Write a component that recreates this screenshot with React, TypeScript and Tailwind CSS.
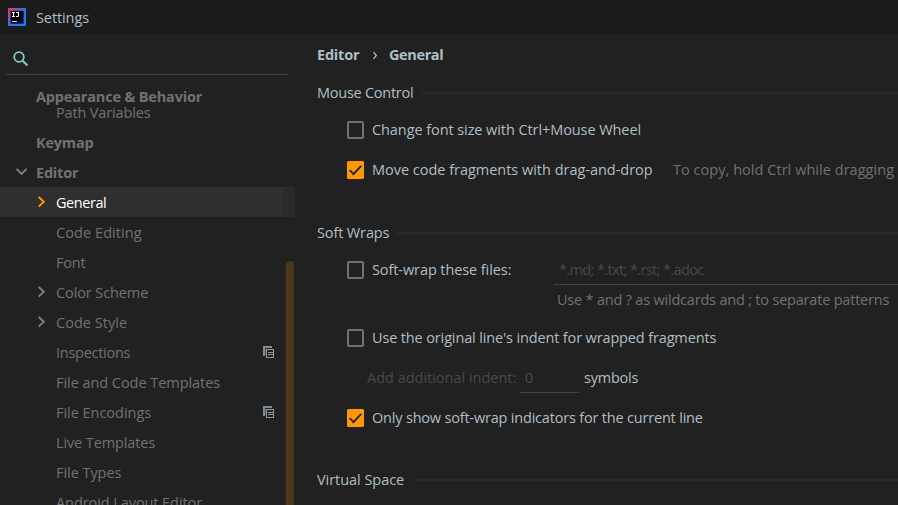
import type { ReactNode } from 'react'

function IntelliJLogo() {
  return (
    <svg className="shrink-0" width="18" height="18" viewBox="0 0 18 18">
      <defs>
        <linearGradient id="ij" x1="0" y1="0" x2="1" y2="0.9">
          <stop offset="0" stopColor="#e0356c" />
          <stop offset="0.3" stopColor="#8a55a8" />
          <stop offset="0.6" stopColor="#1f77f0" />
          <stop offset="1" stopColor="#0a84ff" />
        </linearGradient>
      </defs>
      <rect width="18" height="18" fill="url(#ij)" />
      <rect x="2.6" y="2.8" width="13" height="12.8" fill="#000" />
      <path d="M4 4.5h3M5.5 4.5v4M4 8.5h3M8 4.5h2.5v3q0 1-1 1H8" fill="none" stroke="#fff" strokeWidth="1.1" />
      <path d="M4 13.5h5" stroke="#ddd" strokeWidth="1" />
    </svg>
  )
}

function SearchIcon() {
  return (
    <svg width="16" height="16" viewBox="0 0 16 16" fill="none" stroke="#80cbc4">
      <circle cx="6" cy="6" r="4.8" strokeWidth="1.8" />
      <path d="M9.4 9.4l5 5" strokeWidth="2.1" />
    </svg>
  )
}

function Chevron({ open, color }: { open?: boolean; color: string }) {
  return (
    <svg width="12" height="12" viewBox="0 0 12 12" fill="none" stroke={color} strokeWidth="1.9">
      <path d={open ? 'M0.6 2.9l5 5 5-5' : 'M2.7 1l5.1 4.8-5.1 4.8'} />
    </svg>
  )
}

function ProjectIcon() {
  return (
    <svg width="12" height="12" viewBox="0 0 12 12" fill="none" shapeRendering="crispEdges">
      <path d="M0 0h9v2H2v8H0z" fill="#7e8b91" />
      <path d="M2 9V3h6" stroke="#4c5559" />
      <rect x="3.5" y="3.5" width="7" height="8" stroke="#8b989e" />
      <path d="M10.5 3v9" stroke="#8b989e" />
      <path d="M5 6.5h5M5 8.5h5" stroke="#8b989e" />
    </svg>
  )
}

type Item = { label: string; cls: string; arrow?: boolean; selected?: boolean; project?: boolean }

const items: Item[] = [
  { label: 'General', cls: 'tracking-[-0.45px] text-white', arrow: true, selected: true },
  { label: 'Code Editing', cls: 'tracking-[0.08px]' },
  { label: 'Font', cls: 'tracking-[-0.2px]' },
  { label: 'Color Scheme', cls: 'tracking-[-0.1px]', arrow: true },
  { label: 'Code Style', cls: 'tracking-[0.04px]', arrow: true },
  { label: 'Inspections', cls: 'tracking-[-0.27px]', project: true },
  { label: 'File and Code Templates', cls: 'tracking-[-0.05px]' },
  { label: 'File Encodings', cls: 'tracking-[-0.03px]', project: true },
  { label: 'Live Templates', cls: 'tracking-[-0.12px]' },
  { label: 'File Types', cls: 'tracking-[-0.05px]' },
  { label: 'Android Layout Editor', cls: 'tracking-[-0.08px]' },
]

function TreeRow({ label, cls, arrow, selected, project }: Item) {
  return (
    <div className="flex h-[30px] shrink-0">
      <div className={`flex w-[283px] items-center pl-[36px] ${selected ? 'bg-[#2f2f2f]' : ''}`}>
        <span className="w-[20px] shrink-0">
          {arrow && <Chevron color={selected ? '#ff9800' : '#808080'} />}
        </span>
        <span className={`pt-[2px] ${cls}`}>{label}</span>
        {project && (
          <span className="mr-[8px] ml-auto">
            <ProjectIcon />
          </span>
        )}
      </div>
      <div className={`w-[12px] ${selected ? 'bg-[#2a2a2a]' : ''}`} />
    </div>
  )
}

function Sidebar() {
  return (
    <aside className="relative flex w-[295px] shrink-0 flex-col overflow-hidden text-[#727272]">
      <div className="mr-[7px] ml-[6px] flex h-[41px] shrink-0 items-center border-b border-[#424242] pt-[9px] pl-[7px]">
        <SearchIcon />
      </div>
      <div className="flex h-[32px] shrink-0 items-end pl-[36px] leading-[20px] font-bold tracking-[-0.17px]">
        Appearance &amp; Behavior
      </div>
      <div className="h-[20px] shrink-0 pl-[56px] leading-[12px] tracking-[-0.15px]">Path Variables</div>
      <div className="flex h-[30px] shrink-0 items-center pt-[2px] pl-[36px] font-bold tracking-[-0.2px]">Keymap</div>
      <div className="flex h-[30px] shrink-0 items-center pl-[16px] font-bold tracking-[-0.22px]">
        <span className="w-[20px]">
          <Chevron open color="#808080" />
        </span>
        <span className="pt-[2px]">Editor</span>
      </div>
      {items.map((item) => (
        <TreeRow key={item.label} {...item} />
      ))}
      <div className="absolute top-[227px] right-[1px] bottom-0 w-[8px] rounded-t-full bg-[#4d381a]" />
    </aside>
  )
}

function Section({ title, cls, line }: { title: string; cls: string; line: string }) {
  return (
    <div className="flex h-[30px] items-center">
      <span className={cls}>{title}</span>
      <span className={`flex-1 bg-[#282828] ${line}`} />
    </div>
  )
}

function Check({ checked, cls, children }: { checked?: boolean; cls: string; children: ReactNode }) {
  return (
    <div className="flex h-[30px] items-center pl-[30px]">
      {checked ? (
        <svg className="shrink-0" width="17" height="18" viewBox="0 0 17 18">
          <rect width="17" height="18" rx="1.5" fill="#ff9800" />
          <path d="M2.8 9.2l3.7 3.9 7.7-8.3" fill="none" stroke="#212121" strokeWidth="1.9" />
        </svg>
      ) : (
        <span className="h-[18px] w-[17px] shrink-0 rounded-[2px] border-2 border-[#727272]" />
      )}
      <span className={`pl-[8px] ${cls}`}>{children}</span>
    </div>
  )
}

function Content() {
  return (
    <main className="flex min-w-0 flex-1 flex-col overflow-hidden pl-[22px] text-[#b0bec5]">
      <div className="mt-[6px] flex h-[30px] items-center font-bold">
        <span className="w-[54px] tracking-[-0.22px]">Editor</span>
        <svg className="mr-[9px]" width="9" height="9" viewBox="0 0 9 9" fill="none" stroke="#b0bec5" strokeWidth="1.3">
          <path d="M2.5 1.2l2.8 3.3-2.8 3.3" />
        </svg>
        <span className="tracking-[-0.38px]">General</span>
      </div>
      <div className="mt-[8px]">
        <Section title="Mouse Control" cls="w-[105px] tracking-[-0.26px]" line="h-[3px]" />
      </div>
      <div className="mt-[7px]">
        <Check cls="tracking-[-0.08px]">Change font size with Ctrl+Mouse Wheel</Check>
      </div>
      <div className="mt-[10px] flex">
        <Check checked cls="w-[309px] tracking-[-0.02px]">Move code fragments with drag-and-drop</Check>
        <span className="shrink-0 self-center tracking-[0.04px] text-[#727272]">To copy, hold Ctrl while dragging</span>
      </div>
      <div className="mt-[33px]">
        <Section title="Soft Wraps" cls="w-[80px] tracking-[-0.13px]" line="h-[3px]" />
      </div>
      <div className="mt-[7px] flex">
        <div className="w-[237px] shrink-0">
          <Check cls="tracking-[-0.09px]">Soft-wrap these files:</Check>
        </div>
        <div className="flex h-[30px] flex-1 items-center border-b border-[#424242] pl-[5px] tracking-[-0.62px] text-[#494949]">
          *.md; *.txt; *.rst; *.adoc
        </div>
      </div>
      <div className="flex h-[30px] items-center pl-[240px] tracking-[-0.2px] whitespace-nowrap text-[#727272]">
        Use * and ? as wildcards and ; to separate patterns
      </div>
      <div className="mt-[8px]">
        <Check cls="tracking-[-0.14px]">Use the original line's indent for wrapped fragments</Check>
      </div>
      <div className="mt-[10px] flex h-[30px] items-center pl-[50px]">
        <span className="w-[153px] tracking-[-0.01px] text-[#494949]">Add additional indent:</span>
        <span className="flex h-full w-[59px] items-center border-b border-[#424242] pl-[5px] text-[#494949]">0</span>
        <span className="pl-[5px] tracking-[-0.22px]">symbols</span>
      </div>
      <div className="mt-[10px]">
        <Check checked cls="tracking-[-0.19px]">Only show soft-wrap indicators for the current line</Check>
      </div>
      <div className="mt-[32px]">
        <Section title="Virtual Space" cls="w-[95px] tracking-[-0.04px]" line="h-[2px]" />
      </div>
    </main>
  )
}

export default function App() {
  return (
    <div className="flex h-[505px] w-[898px] flex-col overflow-hidden bg-[#212121] font-['Open_Sans','Noto_Sans',sans-serif] text-[14.5px] leading-[20px] whitespace-nowrap">
      <header className="flex h-[34px] shrink-0 items-center bg-[#1b1b1b] pl-[8px] text-[#b0bec5]">
        <IntelliJLogo />
        <span className="pt-[2px] pl-[10px] tracking-[-0.1px]">Settings</span>
      </header>
      <div className="flex min-h-0 flex-1">
        <Sidebar />
        <Content />
      </div>
    </div>
  )
}
